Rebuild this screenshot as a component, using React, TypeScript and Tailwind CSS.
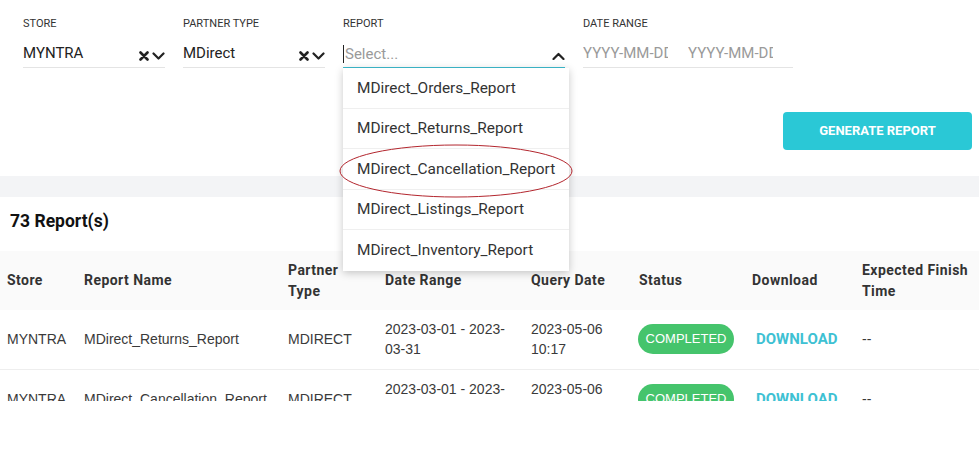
import React from 'react';

const rows = [
  {
    store: 'MYNTRA',
    name: 'MDirect_Returns_Report',
    type: 'MDIRECT',
    range: '2023-03-01 - 2023-03-31',
    query: '2023-05-06 10:17',
  },
  {
    store: 'MYNTRA',
    name: 'MDirect_Cancellation_Report',
    type: 'MDIRECT',
    range: '2023-03-01 - 2023-03-31',
    query: '2023-05-06 10:17',
  },
];

const options = [
  'MDirect_Orders_Report',
  'MDirect_Returns_Report',
  'MDirect_Cancellation_Report',
  'MDirect_Listings_Report',
  'MDirect_Inventory_Report',
];

const ClearIcon = () => (
  <svg width="10" height="10" viewBox="0 0 10 10" className="shrink-0">
    <path d="M1.5 1.5 L8.5 8.5 M8.5 1.5 L1.5 8.5" stroke="#222" strokeWidth="2.6" strokeLinecap="round" />
  </svg>
);

const Chevron = ({ up = false }: { up?: boolean }) => (
  <svg width="13" height="8" viewBox="0 0 13 8" className="shrink-0">
    <path
      d={up ? 'M1.5 7 L6.5 2 L11.5 7' : 'M1.5 1.5 L6.5 6.5 L11.5 1.5'}
      stroke="#222"
      strokeWidth="2.2"
      fill="none"
      strokeLinecap="round"
      strokeLinejoin="round"
    />
  </svg>
);

const Label = ({ children }: { children: React.ReactNode }) => (
  <div className="h-[12px] text-[11px] leading-[12px] text-[#333] uppercase">{children}</div>
);

const SelectField = ({ label, value }: { label: string; value: string }) => (
  <div className="w-[142px]">
    <Label>{label}</Label>
    <div className="h-[38px] flex items-end pb-[5px] border-b border-[#e4e4e4]">
      <span className="flex-1 text-[15px] leading-[18px] text-[#222]">{value}</span>
      <div className="flex items-center gap-[3px] pb-[1px]">
        <ClearIcon />
        <Chevron />
      </div>
    </div>
  </div>
);

export default function App() {
  return (
    <div className="w-[979px] h-[460px] bg-white overflow-hidden" style={{ fontFamily: 'Roboto, sans-serif' }}>
      {/* filters */}
      <div className="relative pl-[23px] pr-[7px] pt-[18px] pb-[26px]">
        <div className="flex gap-[18px]">
          <SelectField label="Store" value="MYNTRA" />
          <SelectField label="Partner Type" value="MDirect" />
          <div className="w-[222px] relative">
            <Label>Report</Label>
            <div className="h-[38px] flex items-end pb-[4px] border-b border-[#3dbdd0]">
              <span className="flex-1 text-[15px] leading-[18px] text-[#9a9a9a] border-l border-[#222] pl-px">
                Select...
              </span>
              <div className="pb-[3px]">
                <Chevron up />
              </div>
            </div>
            {/* open menu */}
            <div className="absolute left-0 top-[50px] w-[226px] bg-white z-10 shadow-[0_2px_8px_rgba(0,0,0,0.22)] text-[15.4px] text-[#333]">
              {options.map((o, i) => (
                <div
                  key={o}
                  className={`h-[40.5px] flex items-center pl-[14px] pt-[1px] ${i < options.length - 1 ? 'border-b border-[#efefef]' : ''}`}
                >
                  {o}
                </div>
              ))}
              <svg
                className="absolute left-[-5px] top-[75px] pointer-events-none"
                width="236"
                height="56"
                viewBox="0 0 236 56"
              >
                <ellipse cx="118" cy="28" rx="116" ry="26" fill="none" stroke="#b3262e" strokeWidth="1" />
              </svg>
            </div>
          </div>
          <div className="w-[210px]">
            <Label>Date Range</Label>
            <div className="h-[38px] flex items-end pb-[5px] border-b border-[#e4e4e4] gap-[20px]">
              <input
                readOnly
                placeholder="YYYY-MM-DD"
                className="w-[85px] text-[15px] leading-[18px] outline-none placeholder:text-[#9a9a9a] bg-transparent"
              />
              <input
                readOnly
                placeholder="YYYY-MM-DD"
                className="w-[85px] text-[15px] leading-[18px] outline-none placeholder:text-[#9a9a9a] bg-transparent"
              />
            </div>
          </div>
        </div>
        <div className="flex justify-end mt-[44px]">
          <button className="w-[189px] h-[38px] rounded-[4px] bg-[#2ac8d6] text-white text-[13px] font-bold uppercase">
            Generate Report
          </button>
        </div>
      </div>

      <div className="h-[21px] bg-[#f3f4f6]" />

      <div className="h-[54px] flex items-center pl-[10px] pb-[6px]">
        <h2 className="text-[17.5px] font-bold text-[#111]">73 Report(s)</h2>
      </div>

      <div className="h-[150px] overflow-hidden">
        <table className="w-[979px] table-fixed border-collapse">
          <thead>
            <tr className="bg-[#fafafa] h-[59px] text-left text-[14px] font-bold text-[#333] leading-[21px] tracking-[0.45px]">
              <th className="w-[77px] px-[7px] font-bold">Store</th>
              <th className="w-[204px] px-[7px] font-bold">Report Name</th>
              <th className="w-[97px] px-[7px] font-bold">Partner Type</th>
              <th className="w-[146px] px-[7px] font-bold">Date Range</th>
              <th className="w-[108px] px-[7px] font-bold">Query Date</th>
              <th className="w-[113px] px-[7px] font-bold">Status</th>
              <th className="w-[110px] px-[7px] font-bold">Download</th>
              <th className="w-[124px] px-[7px] font-bold">Expected Finish Time</th>
            </tr>
          </thead>
          <tbody
            className="text-[14px] text-[#3a3a3a] leading-[20px]"
            style={{ fontFamily: '"Liberation Sans", Arial, sans-serif' }}
          >
            {rows.map((r, i) => (
              <tr key={i} className="h-[59px] border-b border-[#eeeeee]">
                <td className="px-[7px]">{r.store}</td>
                <td className="px-[7px]">{r.name}</td>
                <td className="px-[7px]">{r.type}</td>
                <td className="px-[7px]">{r.range}</td>
                <td className="px-[7px]">{r.query}</td>
                <td className="px-[6px]">
                  <span className="inline-flex items-center justify-center w-[96px] h-[30px] rounded-full bg-[#45c46c] text-white text-[13px]">
                    COMPLETED
                  </span>
                </td>
                <td className="px-[7px]">
                  <span
                    className="pl-[4px] text-[15px] font-bold text-[#3ec1d3]"
                    style={{ fontFamily: 'Roboto, sans-serif' }}
                  >
                    DOWNLOAD
                  </span>
                </td>
                <td className="px-[7px]">--</td>
              </tr>
            ))}
          </tbody>
        </table>
      </div>
    </div>
  );
}
